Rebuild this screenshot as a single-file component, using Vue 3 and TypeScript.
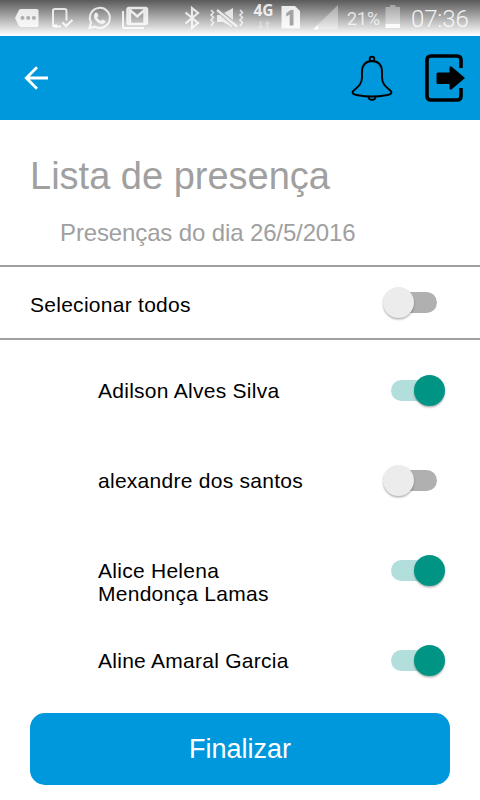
<script setup lang="ts">
import { ref } from 'vue'

interface Student {
  name: string
  present: boolean
}

const students = ref<Student[]>([
  { name: 'Adilson Alves Silva', present: true },
  { name: 'alexandre dos santos', present: false },
  { name: 'Alice Helena Mendonça Lamas', present: true },
  { name: 'Aline Amaral Garcia', present: true },
])
const allSelected = ref(false)

function toggleAll(): void {
  allSelected.value = !allSelected.value
  students.value.forEach((s) => (s.present = allSelected.value))
}
</script>

<template>
  <div class="screen">
    <div class="status">
      <svg width="480" height="36" viewBox="0 0 480 36">
        <g fill="#fff" fill-opacity=".82">
          <!-- message tag -->
          <path fill-rule="evenodd" d="M21 9H37Q38.500 9 38.500 10.500V25.500Q38.500 27 37 27H21Q19.500 27 18.700 25.600L15 18L18.700 10.400Q19.500 9 21 9ZM22.500 16a2 2 0 1 0 0 4a2 2 0 1 0 0-4ZM28.200 16a2 2 0 1 0 0 4a2 2 0 1 0 0-4ZM33.900 16a2 2 0 1 0 0 4a2 2 0 1 0 0-4Z" />
          <!-- device check -->
          <path d="M61 26.500H55Q53 26.500 53 24.500V10.500Q53 9 55 9H64.500Q66.500 9 66.500 11V20.500" fill="none" stroke="#fff" stroke-opacity=".8" stroke-width="2" />
          <path d="M54 24.500H57V27H54Z" />
          <path d="M62.500 22.500L66 26L72.500 20" fill="none" stroke="#fff" stroke-opacity=".85" stroke-width="2" />
          <!-- phone bubble -->
          <path d="M89.500 28L91 22.500A10 10 0 1 1 94.800 26.500Z" fill="none" stroke="#fff" stroke-opacity=".8" stroke-width="2" />
          <path d="M95.500 12.500L97.500 13L98.500 16L97 17.500Q98.500 20 101 21L102.500 19.500L105.500 21Q105 24 102 24Q98 23.500 95 19.500Q92.500 15.500 95.500 12.500Z" />
          <!-- mail -->
          <path d="M129 8H145.500Q147 8 147 9.500V22.500Q147 24 145.500 24H129Q127.500 24 127.500 22.500V9.500Q127.500 8 129 8ZM130 23V10L137.200 16.500L144.500 10V23" fill="none" stroke="#fff" stroke-opacity=".82" stroke-width="2.400" />
          <path d="M122 11H124V27H144V29H124Q122 29 122 27Z" />
        </g>
        <!-- bluetooth -->
        <path d="M185.500 12.500L198 23L192 28V8L198 13L185.500 23.500" fill="none" stroke="#fff" stroke-opacity=".8" stroke-width="2.200" />
        <!-- muted speaker with vibration -->
        <g fill="none" stroke="#fff" stroke-opacity=".75" stroke-width="1.600">
          <path d="M211 10L213.500 12.500L211 15L213.500 17.500L211 20L213.500 22.500L211 26" />
          <path d="M240 10L242.500 12.500L240 15L242.500 17.500L240 20L242.500 22.500L240 26" />
          <path d="M217 10L237 26.500" stroke-width="2.400" />
        </g>
        <path d="M224 13L233 8V20ZM217 15H220L232 25.500V27L223 22H217Z" fill="#fff" fill-opacity=".75" />
        <text x="253.500" y="16" class="net">4G</text>
        <path d="M259.500 21H261.500V26H263.500L260.500 29L257.500 26H259.500ZM266.500 29V24H264.500L267.500 20.500L270.500 24H268.500V29Z" fill="#fff" fill-opacity=".3" />
        <!-- SIM card -->
        <path d="M281.500 6H295L300 11V28.500H281.500Z" fill="#fff" fill-opacity=".86" />
        <path d="M286 13.500L290.500 10H293.500V25.500H289.700V14.500L286.500 16.500Z" fill="#a4a4a4" />
        <!-- signal -->
        <path d="M338 5V29.500H313Z" fill="#fff" fill-opacity=".36" />
        <path d="M318 25V29.500H313Z" fill="#fff" />
        <text x="347" y="25" class="pct">21%</text>
        <!-- battery -->
        <path d="M385.500 7H390V5H395.500V7H400V24H385.500Z" fill="#fff" fill-opacity=".36" />
        <path d="M385.500 24H400V28H385.500Z" fill="#fff" fill-opacity=".9" />
        <text x="411" y="27" class="clock">07:36</text>
      </svg>
    </div>

    <header class="bar">
      <button class="icon-btn back" aria-label="Voltar">
        <svg width="28" height="28" viewBox="0 0 28 28" fill="none" stroke="#fff" stroke-width="2.800">
          <path d="M26 14H5M15 3.300L4.300 14L15 24.700" />
        </svg>
      </button>
      <div class="actions">
        <button class="icon-btn" aria-label="Avisos">
          <svg width="42" height="46" viewBox="0 0 42 46" fill="none" stroke="#000" stroke-width="1.900">
            <circle cx="21" cy="4" r="2.300" />
            <path d="M21 6C14.500 6 11 10.500 11 16.500V22C11 29 7.500 31.500 3 35.200C-0.500 38.500 3 39.500 7 40.200C15 41.600 27 41.600 35 40.200C39 39.500 42.500 38.500 39 35.200C34.500 31.500 31 29 31 22V16.500C31 10.500 27.500 6 21 6Z" />
            <path d="M17.500 41.200C17.500 46 24.500 46 24.500 41.200" />
          </svg>
        </button>
        <button class="icon-btn" aria-label="Sair">
          <svg width="41" height="48" viewBox="0 0 41 48">
            <path d="M36 14V6Q36 2 32 2H6Q2 2 2 6V42Q2 46 6 46H32Q36 46 36 42V34" fill="none" stroke="#000" stroke-width="3.600" />
            <path d="M13 18.500H24.500V14Q24.500 11 27 13L40 24L27 35Q24.500 37 24.500 34V30H13Q11.500 30 11.500 28.500V20Q11.500 18.500 13 18.500Z" />
          </svg>
        </button>
      </div>
    </header>

    <section class="heading">
      <h1>Lista de presença</h1>
      <h2>Presenças do dia 26/5/2016</h2>
    </section>

    <section class="select-all">
      <span class="label">Selecionar todos</span>
      <button class="switch" :class="{ on: allSelected }" role="switch" :aria-checked="allSelected" @click="toggleAll">
        <span class="thumb"></span>
      </button>
    </section>

    <ul class="list">
      <li v-for="s in students" :key="s.name" class="row">
        <span class="name">{{ s.name }}</span>
        <button class="switch" :class="{ on: s.present }" role="switch" :aria-checked="s.present" @click="s.present = !s.present">
          <span class="thumb"></span>
        </button>
      </li>
    </ul>

    <footer class="footer">
      <button class="finish">Finalizar</button>
    </footer>
  </div>
</template>

<style>
body {
  background: #fff;
}
</style>

<style scoped>
.screen {
  width: 480px;
  height: 800px;
  display: flex;
  flex-direction: column;
  overflow: hidden;
  background: #fff;
  color: #000;
  font-family: "Liberation Sans", Arial, sans-serif;
}
button {
  border: 0;
  padding: 0;
  margin: 0;
  background: none;
  font-family: inherit;
}
svg {
  display: block;
}
.status {
  height: 36px;
  flex: none;
  background: linear-gradient(#5a5a5a, #fff 98%);
}
.status text {
  fill: #fff;
}
.net {
  font-family: "Open Sans", sans-serif;
  font-size: 15.500px;
  font-weight: 700;
  fill-opacity: 0.85;
}
.pct {
  font-family: Roboto, sans-serif;
  font-size: 17.800px;
  fill-opacity: 0.75;
}
.clock {
  font-family: Roboto, sans-serif;
  font-size: 24px;
  font-weight: 300;
  letter-spacing: -0.15px;
  fill-opacity: 0.9;
}
.bar {
  height: 84px;
  flex: none;
  box-sizing: border-box;
  padding: 0 14px 0 22px;
  display: flex;
  align-items: center;
  justify-content: space-between;
  background: #0098dc;
}
.actions {
  display: flex;
  align-items: center;
  gap: 32px;
}
.heading {
  height: 145px;
  flex: none;
  box-sizing: border-box;
  padding: 35px 30px 0;
  color: #a0a0a0;
}
h1,
h2 {
  margin: 0;
  font-weight: 400;
}
h1 {
  font-size: 38px;
  line-height: 42px;
}
h2 {
  padding: 22px 0 0 30px;
  font-size: 24px;
  line-height: 28px;
  letter-spacing: -0.13px;
}
.select-all {
  height: 75px;
  flex: none;
  box-sizing: border-box;
  border-top: 2px solid #a0a0a0;
  border-bottom: 2px solid #a0a0a0;
  padding: 20px 35px 0 30px;
  display: flex;
  align-items: flex-start;
  justify-content: space-between;
}
.label,
.name {
  font-size: 21px;
  line-height: 23px;
  letter-spacing: 0.27px;
}
.label {
  margin-top: 6px;
}
.list {
  list-style: none;
  margin: 0;
  padding: 5px 0 0;
  height: 360px;
  flex: none;
}
.row {
  height: 90px;
  box-sizing: border-box;
  padding: 30px 35px 0 98px;
  display: flex;
  align-items: flex-start;
  justify-content: space-between;
}
.name {
  width: 220px;
  margin-top: 4px;
}
.switch {
  width: 62px;
  height: 31px;
  flex: none;
  display: flex;
  align-items: center;
  isolation: isolate;
}
.switch::before {
  content: "";
  order: 1;
  width: 46px;
  height: 21px;
  border-radius: 11px;
  margin-left: -23px;
  background: #b0b0b0;
}
.thumb {
  width: 31px;
  height: 31px;
  border-radius: 50%;
  background: #ececec;
  box-shadow: 0 1.500px 2px rgba(0, 0, 0, 0.3);
  z-index: 1;
}
.switch.on {
  justify-content: flex-end;
}
.switch.on::before {
  order: 0;
  margin: 0 -23px 0 0;
  background: #b2dfdb;
}
.switch.on .thumb {
  background: #009485;
}
.footer {
  flex: none;
  padding: 8px 30px 0;
}
.finish {
  width: 420px;
  height: 72px;
  border-radius: 15px;
  background: #0098dc;
  color: #fff;
  font-size: 27px;
}
</style>
